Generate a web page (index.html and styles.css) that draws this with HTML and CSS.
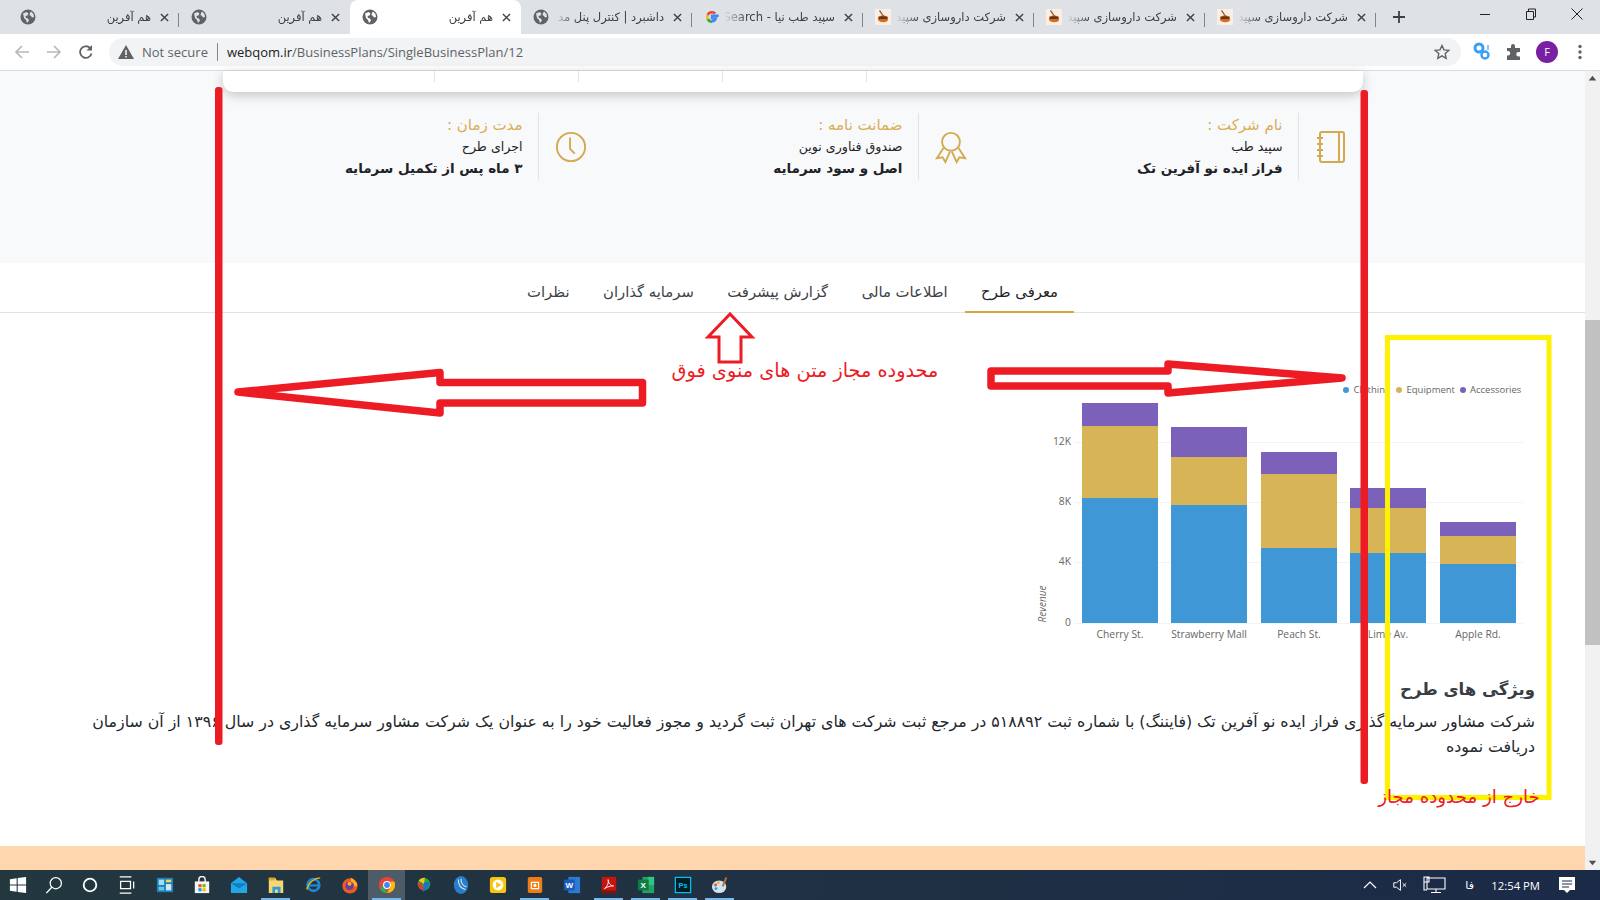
FILE: index.html
```html
<!DOCTYPE html>
<html lang="fa">
<head>
<meta charset="utf-8">
<title>هم آفرین</title>
<link rel="stylesheet" href="styles.css">
</head>
<body>
<svg class="defs" width="0" height="0" aria-hidden="true">
  <symbol id="globe" viewBox="0 0 16 16">
    <circle cx="8" cy="8" r="7.5" fill="#5f6368"/>
    <path d="M3 4.5 6.5 3l2 1.5-1 2-2 .5.5 2 2 .5 1 2-2 2.5-1-3-2-2zM11 2.5l2.5 2.5.5 3-2 .5-1-1.5-1.500-1 .5-2z" fill="#dee1e6"/>
  </symbol>
  <symbol id="globe-w" viewBox="0 0 16 16">
    <circle cx="8" cy="8" r="7.500" fill="#5f6368"/>
    <path d="M3 4.500 6.500 3l2 1.500-1 2-2 .5.5 2 2 .5 1 2-2 2.500-1-3-2-2zM11 2.500l2.500 2.500.5 3-2 .5-1-1.500-1.500-1 .5-2z" fill="#fff"/>
  </symbol>
  <symbol id="pharma" viewBox="0 0 16 16">
    <rect width="16" height="16" fill="#fbeee2"/>
    <path d="M3 8c2-2 8-2 10 0v3c-1 3-8 3-10 0z" fill="#d9691e"/>
    <path d="M4 8c2-1 6-1 8 0v2H4z" fill="#5c3a21"/>
    <path d="M5 1l4 6-1 .5L4 2z" fill="#8a5a3a"/>
  </symbol>
  <symbol id="close" viewBox="0 0 10 10">
    <path d="M1 1l8 8M9 1l-8 8" stroke="#3c4043" stroke-width="1.500" fill="none"/>
  </symbol>
</svg>

<div class="tabstrip">
  <div class="tab sep"><svg class="fav"><use href="#globe"/></svg><span class="tab-title">هم آفرین</span><svg class="tab-x"><use href="#close"/></svg></div>
  <div class="tab"><svg class="fav"><use href="#globe"/></svg><span class="tab-title">هم آفرین</span><svg class="tab-x"><use href="#close"/></svg></div>
  <div class="tab active"><svg class="fav"><use href="#globe-w"/></svg><span class="tab-title">هم آفرین</span><svg class="tab-x"><use href="#close"/></svg></div>
  <div class="tab sep"><svg class="fav"><use href="#globe"/></svg><span class="tab-title">داشبرد | کنترل پنل مد</span><svg class="tab-x"><use href="#close"/></svg></div>
  <div class="tab sep">
    <svg class="fav" viewBox="0 0 16 16">
      <path d="M14.700 6.700H8v2.700h3.900A4.200 4.200 0 0 1 8 12.300" fill="none" stroke="#4285f4" stroke-width="2.400"/>
      <path d="M8 12.700a4.700 4.700 0 0 1-4.300-2.800" fill="none" stroke="#34a853" stroke-width="2.600"/>
      <path d="M3.700 10.200a5 5 0 0 1 0-4.400" fill="none" stroke="#fbbc05" stroke-width="2.600"/>
      <path d="M3.700 5.900A4.800 4.800 0 0 1 11.200 4.500" fill="none" stroke="#ea4335" stroke-width="2.600"/>
    </svg>
    <span class="tab-title">سپید طب نیا - Search</span><svg class="tab-x"><use href="#close"/></svg></div>
  <div class="tab sep"><svg class="fav"><use href="#pharma"/></svg><span class="tab-title">شرکت داروسازی سپید</span><svg class="tab-x"><use href="#close"/></svg></div>
  <div class="tab sep"><svg class="fav"><use href="#pharma"/></svg><span class="tab-title">شرکت داروسازی سپید</span><svg class="tab-x"><use href="#close"/></svg></div>
  <div class="tab sep"><svg class="fav"><use href="#pharma"/></svg><span class="tab-title">شرکت داروسازی سپید</span><svg class="tab-x"><use href="#close"/></svg></div>
  <svg class="newtab" viewBox="0 0 12 12"><path d="M6 0v12M0 6h12" stroke="#3c4043" stroke-width="1.800"/></svg>
  <div class="winctl">
    <svg class="wc" viewBox="0 0 46 14"><path d="M18 7.500h10" stroke="#222" stroke-width="1"/></svg>
    <svg class="wc" viewBox="0 0 46 14"><path d="M18.500 4.500h7v8h-7zM20.500 4.500v-2.500h7v8h-2" fill="none" stroke="#222"/></svg>
    <svg class="wc" viewBox="0 0 46 14"><path d="M17.500 1.500l11 11M28.500 1.500l-11 11" stroke="#222" fill="none"/></svg>
  </div>
</div>

<div class="toolbar">
  <svg class="nav-ic" viewBox="0 0 16 16"><path d="M15 8H2M8 2 2 8l6 6" fill="none" stroke="#b6b8bb" stroke-width="1.700"/></svg>
  <svg class="nav-ic" viewBox="0 0 16 16"><path d="M1 8h13M8 2l6 6-6 6" fill="none" stroke="#b6b8bb" stroke-width="1.700"/></svg>
  <svg class="nav-ic" viewBox="0 0 16 16"><path d="M13.500 9.500A5.800 5.800 0 1 1 12 4" fill="none" stroke="#5f6368" stroke-width="1.800"/><path d="M14 1v5.500H8.500z" fill="#5f6368"/></svg>
  <div class="omnibox">
    <svg class="warn" viewBox="0 0 16 14"><path d="M8 0l8 14H0z" fill="#5f6368"/><path d="M7.200 5h1.600v5H7.200zM7.200 11h1.600v1.500H7.200z" fill="#f1f3f4"/></svg>
    <span class="not-secure">Not secure</span>
    <span class="omni-sep"></span>
    <span class="url"><b>webqom.ir</b>/BusinessPlans/SingleBusinessPlan/12</span>
    <svg class="star" viewBox="0 0 16 16"><path d="M8 1.500l2 4.400 4.700.5-3.500 3.200 1 4.700L8 11.900l-4.200 2.400 1-4.700L1.300 6.400 6 5.900z" fill="none" stroke="#5f6368" stroke-width="1.400"/></svg>
  </div>
  <div class="ext-row">
    <svg class="ext" viewBox="0 0 20 20"><circle cx="7" cy="6" r="4" fill="none" stroke="#3aa0f3" stroke-width="3"/><circle cx="13" cy="13" r="3.500" fill="none" stroke="#3aa0f3" stroke-width="2.400"/><path d="M16 3v5" stroke="#8cc8f7" stroke-width="2"/></svg>
    <svg class="ext" viewBox="0 0 20 20"><path d="M3 6h4V4a2 2 0 0 1 4 0v2h5v4h-1.500a2.200 2.200 0 0 0 0 4.500H16V18H3v-4.500h1a2.200 2.200 0 0 0 0-4.500H3z" fill="#5f6368"/></svg>
    <span class="avatar">F</span>
    <svg class="ext" viewBox="0 0 20 20"><circle cx="10" cy="4.500" r="1.700" fill="#5f6368"/><circle cx="10" cy="10" r="1.700" fill="#5f6368"/><circle cx="10" cy="15.500" r="1.700" fill="#5f6368"/></svg>
  </div>
</div>

<div class="viewport">
  <div class="page">
    <section class="hero">
      <div class="container">
        <div class="card">
          <div class="card-cell"></div><div class="card-cell"></div><div class="card-cell"></div><div class="card-cell"></div>
        </div>
        <div class="facts" dir="rtl">
          <div class="fact">
            <div class="fact-ic">
              <svg class="gold" viewBox="0 0 30 34"><rect x="4" y="2" width="24" height="30" rx="2"/><path d="M23 2v30M1 8h6M1 14h6M1 20h6M1 26h6"/></svg>
            </div>
            <div class="fact-body">
              <div class="fact-title">نام شرکت :</div>
              <div class="fact-sub">سپید طب</div>
              <div class="fact-val">فراز ایده نو آفرین تک</div>
            </div>
          </div>
          <div class="fact">
            <div class="fact-ic">
              <svg class="gold" viewBox="0 0 34 34"><circle cx="17" cy="11.500" r="9.500"/><path d="M9 18 2 29l6-1 3 5 5-11M25 18l7 11-6-1-3 5-5-11"/></svg>
            </div>
            <div class="fact-body">
              <div class="fact-title">ضمانت نامه :</div>
              <div class="fact-sub">صندوق فناوری نوین</div>
              <div class="fact-val">اصل و سود سرمایه</div>
            </div>
          </div>
          <div class="fact">
            <div class="fact-ic">
              <svg class="gold" viewBox="0 0 34 34"><circle cx="17" cy="17" r="15"/><path d="M16 7v12l5 5"/></svg>
            </div>
            <div class="fact-body">
              <div class="fact-title">مدت زمان :</div>
              <div class="fact-sub">اجرای طرح</div>
              <div class="fact-val">۳ ماه پس از تکمیل سرمایه</div>
            </div>
          </div>
        </div>
      </div>
    </section>

    <nav class="nav" dir="rtl">
      <a class="nav-link on">معرفی طرح</a>
      <a class="nav-link">اطلاعات مالی</a>
      <a class="nav-link">گزارش پیشرفت</a>
      <a class="nav-link">سرمایه گذاران</a>
      <a class="nav-link">نظرات</a>
    </nav>

    <main class="content">
      <svg class="chart" viewBox="1020 345 530 310">
        <g class="grid">
          <path d="M1074 442.500h449M1074 502.500h449M1074 562.500h449M1074 623.500h449"/>
        </g>
        <g class="axis">
          <text x="1071" y="445" text-anchor="end">12K</text>
          <text x="1071" y="505" text-anchor="end">8K</text>
          <text x="1071" y="565" text-anchor="end">4K</text>
          <text x="1071" y="626" text-anchor="end">0</text>
          <text class="axis-title" transform="translate(1046 604) rotate(-90)" text-anchor="middle">Revenue</text>
        </g>
        <g class="c-blue">
          <rect x="1082" y="498" width="76" height="125"/>
          <rect x="1171" y="505" width="76" height="118"/>
          <rect x="1261" y="548" width="76" height="75"/>
          <rect x="1350" y="553" width="76" height="70"/>
          <rect x="1440" y="564" width="76" height="59"/>
        </g>
        <g class="c-yellow">
          <rect x="1082" y="426" width="76" height="72"/>
          <rect x="1171" y="457" width="76" height="48"/>
          <rect x="1261" y="474" width="76" height="74"/>
          <rect x="1350" y="508" width="76" height="45"/>
          <rect x="1440" y="536" width="76" height="28"/>
        </g>
        <g class="c-purple">
          <rect x="1082" y="403" width="76" height="23"/>
          <rect x="1171" y="427" width="76" height="30"/>
          <rect x="1261" y="452" width="76" height="22"/>
          <rect x="1350" y="488" width="76" height="20"/>
          <rect x="1440" y="522" width="76" height="14"/>
        </g>
        <g class="axis" text-anchor="middle">
          <text x="1120" y="638">Cherry St.</text>
          <text x="1209" y="638">Strawberry Mall</text>
          <text x="1299" y="638">Peach St.</text>
          <text x="1388" y="638">Lime Av.</text>
          <text x="1478" y="638">Apple Rd.</text>
        </g>
        <g class="legend">
          <circle class="c-blue" cx="1346" cy="390" r="3"/><text x="1353.500" y="393">Clothing</text>
          <circle class="c-yellow" cx="1399" cy="390" r="3"/><text x="1406.500" y="393">Equipment</text>
          <circle class="c-purple" cx="1463" cy="390" r="3"/><text x="1470" y="393">Accessories</text>
        </g>
      </svg>
      <article class="about" dir="rtl">
        <h3 class="about-h">ویژگی های طرح</h3>
        <p class="about-p">شرکت مشاور سرمایه گذاری فراز ایده نو آفرین تک (فایننگ) با شماره ثبت ۵۱۸۸۹۲ در مرجع ثبت شرکت های تهران ثبت گردید و مجوز فعالیت خود را به عنوان یک شرکت مشاور سرمایه گذاری در سال ۱۳۹۶ از آن سازمان دریافت نموده</p>
      </article>
    </main>
    <div class="footer-bar"></div>
  </div>
  <div class="scrollbar">
    <svg class="sb-arrow" viewBox="0 0 16 16"><path d="M4 10l4-5 4 5z" fill="#505050"/></svg>
    <div class="sb-track"><div class="sb-thumb"></div></div>
    <svg class="sb-arrow" viewBox="0 0 16 16"><path d="M4 6l4 5 4-5z" fill="#505050"/></svg>
  </div>
</div>

<footer class="taskbar">
  <div class="tb-sys">
    <svg viewBox="0 0 20 20"><path d="M1 3.500 8.500 2.400V9.500H1zM9.700 2.200 19 1V9.500H9.700zM1 10.500H8.500V17.600L1 16.500zM9.700 10.500H19V19L9.700 17.800z" fill="#fff"/></svg>
  </div>
  <div class="tb-sys">
    <svg viewBox="0 0 20 20"><circle cx="12" cy="8" r="6.200" fill="none" stroke="#fff" stroke-width="1.400"/><path d="M7.500 12.500 1.500 19" stroke="#fff" stroke-width="1.500"/></svg>
  </div>
  <div class="tb-sys">
    <svg viewBox="0 0 20 20"><circle cx="10" cy="10" r="7" fill="none" stroke="#fff" stroke-width="2"/></svg>
  </div>
  <div class="tb-sys">
    <svg viewBox="0 0 20 20"><path d="M3 1h13M3 19h13M4 6h11v8H4zM18.500 6v8" fill="none" stroke="#fff" stroke-width="1.400"/></svg>
  </div>
  <div class="tb-gap"></div>
  <div class="tb-app"><svg viewBox="0 0 20 20"><rect x="1" y="2" width="18" height="16" fill="#1f7fb8"/><rect x="3" y="4" width="6" height="6" fill="#9fe0f5"/><rect x="11" y="4" width="6" height="3" fill="#f4d35e"/><rect x="11" y="9" width="6" height="7" fill="#cfeaf7"/><rect x="3" y="12" width="6" height="4" fill="#6cc3e8"/></svg></div>
  <div class="tb-app"><svg viewBox="0 0 20 20"><path d="M2 6h16v13H2z" fill="#f5f5f5"/><path d="M6.500 8V4a3.500 3.500 0 0 1 7 0v4" fill="none" stroke="#f5f5f5" stroke-width="1.600"/><rect x="6" y="9" width="3.500" height="3.500" fill="#f25022"/><rect x="10.500" y="9" width="3.500" height="3.500" fill="#7fba00"/><rect x="6" y="13.500" width="3.500" height="3.500" fill="#00a4ef"/><rect x="10.500" y="13.500" width="3.500" height="3.500" fill="#ffb900"/></svg></div>
  <div class="tb-app"><svg viewBox="0 0 20 20"><path d="M1 8 10 1l9 7v11H1z" fill="#21a6e6"/><path d="M1 8l9 6 9-6" fill="#0f7fc0"/></svg></div>
  <div class="tb-app open"><svg viewBox="0 0 20 20"><path d="M2 2h7l2 3h7v14H2z" fill="#f7d774"/><path d="M2 2h7v3H2z" fill="#e3a92f"/><path d="M6 12h9v7h-3v-4H9v4H6z" fill="#2f9bd9"/></svg></div>
  <div class="tb-app"><svg viewBox="0 0 20 20"><circle cx="10.500" cy="10" r="6.500" fill="none" stroke="#1e88d4" stroke-width="3"/><path d="M5 10.500h11" stroke="#1e88d4" stroke-width="2.500"/><path d="M3 15c2-8 9-13 15-13" fill="none" stroke="#e8b51e" stroke-width="1.400"/></svg></div>
  <div class="tb-app"><svg viewBox="0 0 20 20"><circle cx="10" cy="11" r="8.500" fill="#ee5a24"/><path d="M11 2c4 2 7 5 7 9l-3 1c0-3-2-5-4-6z" fill="#ffb01f"/><circle cx="9.500" cy="11" r="4.500" fill="#6b3fa0"/><circle cx="9.500" cy="8.500" r="2.200" fill="#ffb01f"/></svg></div>
  <div class="tb-app open active"><svg viewBox="0 0 20 20"><circle cx="10" cy="10" r="9" fill="#ea4335"/><path d="M10 19a9 9 0 0 1-7.800-4.500L7 8z" fill="#34a853"/><path d="M19 10a9 9 0 0 1-9 9l4.500-7.500-.5-5.500h4A9 9 0 0 1 19 10z" fill="#fbbc05"/><circle cx="10" cy="10" r="4.400" fill="#fff"/><circle cx="10" cy="10" r="3.200" fill="#4285f4"/></svg></div>
  <div class="tb-app"><svg viewBox="0 0 20 20"><circle cx="10" cy="9" r="7" fill="#2aa43b"/><path d="M4 5a8 8 0 0 1 7-3l-1 7z" fill="#f5c518"/><path d="M3 8c0 5 3 8 8 8l-4-8z" fill="#e23a2e"/><path d="M10 7l7 0-3 6-5 5z" fill="#1c6fd6"/></svg></div>
  <div class="tb-app"><svg viewBox="0 0 20 20"><ellipse cx="10" cy="10" rx="8" ry="10" fill="#2a7dc9"/><path d="M7 4c0 6 3 10 8 11M10 3c0 4 2 8 6 9" fill="none" stroke="#d6ecfb" stroke-width="1.200"/></svg></div>
  <div class="tb-app"><svg viewBox="0 0 20 20"><rect x="1" y="1" width="18" height="18" rx="3" fill="#f7c60a"/><circle cx="10" cy="10" r="6" fill="#fff"/><path d="M8 6.500 13.500 10 8 13.500z" fill="#f7c60a"/></svg></div>
  <div class="tb-app open"><svg viewBox="0 0 20 20"><rect x="2" y="1" width="16" height="18" rx="2" fill="#ef7d15"/><path d="M6 7h8v7H6z" fill="none" stroke="#fff" stroke-width="1.300"/><circle cx="10" cy="10.500" r="1.800" fill="#fff"/></svg></div>
  <div class="tb-app"><svg viewBox="0 0 20 20"><rect x="6" y="1" width="13" height="18" fill="#2b7cd3"/><rect x="1" y="4" width="12" height="12" fill="#185abd"/><text class="tb-letter" x="7" y="13.500" text-anchor="middle">W</text></svg></div>
  <div class="tb-app open"><svg viewBox="0 0 20 20"><rect x="2" y="1" width="16" height="18" fill="#c8140f"/><rect x="2" y="16" width="16" height="3" fill="#8e0d0a"/><path d="M5 14c3-2 5-7 4-10 0 4 3 7 6 7-3 0-7 1-10 3z" fill="none" stroke="#fff" stroke-width="1"/></svg></div>
  <div class="tb-app open"><svg viewBox="0 0 20 20"><rect x="6" y="1" width="13" height="18" fill="#21a366"/><rect x="12" y="1" width="7" height="9" fill="#33c481"/><rect x="1" y="4" width="12" height="12" fill="#107c41"/><text class="tb-letter" x="7" y="13.500" text-anchor="middle">X</text></svg></div>
  <div class="tb-app open"><svg viewBox="0 0 20 20"><rect x="1.500" y="1.500" width="17" height="17" fill="#001d26" stroke="#00c8ff" stroke-width="1.300"/><text class="tb-ps" x="10" y="13.500" text-anchor="middle">Ps</text></svg></div>
  <div class="tb-app open"><svg viewBox="0 0 20 20"><ellipse cx="9" cy="12" rx="8" ry="7" fill="#cfe4ef"/><circle cx="5" cy="10" r="1.600" fill="#e3503c"/><circle cx="8" cy="7.500" r="1.600" fill="#f0b429"/><circle cx="5.500" cy="14" r="1.600" fill="#2f9bd9"/><path d="M16 1l2 1-4 10-2-1z" fill="#b5762a"/></svg></div>
  <div class="tray">
    <svg class="tr-ic" viewBox="0 0 16 16"><path d="M2 11l6-6 6 6" fill="none" stroke="#fff" stroke-width="1.200"/></svg>
    <svg class="tr-ic" viewBox="0 0 18 16"><path d="M2 5.500h3L9.500 2v12L5 10.500H2zM12 6l4 4M16 6l-4 4" fill="none" stroke="#fff" stroke-width="1.100"/></svg>
    <svg class="tr-ic wide" viewBox="0 0 24 18"><path d="M5 2h18v11H5zM2 1h5v5H2zM14 13v3M9 16.500h10M2 6v8h3" fill="#1b2b47" stroke="#fff" stroke-width="1.100"/></svg>
    <span class="tr-lang">فا</span>
    <span class="tr-time">12:54 PM</span>
    <svg class="tr-note" viewBox="0 0 18 18"><path d="M1 1h16v13h-5l-3 3-3-3H1z" fill="#fff"/><path d="M4 5h10M4 8h10M4 11h7" stroke="#1b2b47" stroke-width="1"/></svg>
  </div>
</footer>

<svg class="marks" viewBox="0 0 1600 900">
  <rect class="mark-yellow" x="1387.500" y="337.500" width="161.500" height="460"/>
  <rect class="mark-fill" x="215" y="87" width="7.500" height="658" rx="3"/>
  <rect class="mark-fill" x="1360.500" y="90" width="7.500" height="694" rx="3"/>
  <path class="mark-line" d="M238 392 440 372.500v10H642.500v20.500H440v10z"/>
  <path class="mark-line" d="M991 371H1168v-7L1342 378 1168 393v-7H991z"/>
  <path class="mark-thin" d="M730 314 708 337h11v25h22V337h11z"/>
  <text class="mark-text" x="805" y="377" text-anchor="middle" direction="rtl">محدوده مجاز متن های منوی فوق</text>
  <text class="mark-text small" x="1459" y="803" text-anchor="middle" direction="rtl">خارج از محدوده مجاز</text>
</svg>
</body>
</html>
```
FILE: styles.css
```css
* { box-sizing: border-box; }
html, body { margin: 0; padding: 0; }
body {
  position: relative;
  width: 1600px;
  height: 900px;
  overflow: hidden;
  display: flex;
  flex-direction: column;
  background: #fff;
  font-family: "DejaVu Sans", sans-serif;
}
.defs { position: absolute; }

/* tab strip */
.tabstrip {
  height: 34px;
  flex: none;
  display: flex;
  align-items: stretch;
  padding-left: 8px;
  background: #dee1e6;
}
.tab {
  position: relative;
  width: 171px;
  flex: none;
  display: flex;
  align-items: center;
  padding: 0 10px 0 12px;
  border-radius: 8px 8px 0 0;
}
.tab.active { background: #fff; }
.tab.sep::after {
  content: "";
  position: absolute;
  right: 0;
  top: 13px;
  height: 14px;
  width: 1px;
  background: #80868b;
}
.fav { width: 16px; height: 16px; flex: none; }
.tab-title {
  flex: 1;
  min-width: 0;
  overflow: hidden;
  white-space: nowrap;
  direction: rtl;
  text-align: right;
  font-size: 11.500px;
  color: #3c4043;
  padding-right: 1px;
  margin-left: 4px;
  -webkit-mask-image: linear-gradient(to right, transparent 0, #000 24px);
  mask-image: linear-gradient(to right, transparent 0, #000 24px);
}
.tab-x { width: 9px; height: 9px; flex: none; margin: 0 0 0 8px; }
.newtab { width: 12px; height: 12px; align-self: center; margin-left: 17px; flex: none; }
.winctl { margin-left: auto; display: flex; align-items: flex-start; padding-top: 7px; }
.wc { width: 46px; height: 14px; display: block; }

/* toolbar */
.toolbar {
  height: 37px;
  flex: none;
  display: flex;
  align-items: center;
  padding: 0 0 0 14px;
  background: #fff;
  border-bottom: 1px solid #dadce0;
}
.nav-ic { width: 16px; height: 16px; flex: none; margin-right: 16px; }
.omnibox {
  width: 1352px;
  height: 28px;
  margin-left: -1px;
  border-radius: 14px;
  background: #f1f3f4;
  display: flex;
  align-items: center;
  padding-left: 9px;
  font-family: "Open Sans", sans-serif;
  font-size: 13px;
  color: #5f6368;
}
.warn { width: 16px; height: 14px; flex: none; }
.not-secure { margin-left: 8px; white-space: nowrap; }
.omni-sep { width: 1px; height: 18px; background: #80868b; margin: 0 9px; flex: none; }
.url { white-space: nowrap; }
.url b { font-weight: 400; color: #202124; }
.star { width: 16px; height: 16px; margin-left: auto; margin-right: 11px; flex: none; }
.ext-row { display: flex; align-items: center; flex: 1; padding-left: 11px; gap: 12px; }
.ext { width: 20px; height: 20px; flex: none; }
.avatar {
  width: 22px;
  height: 22px;
  flex: none;
  border-radius: 50%;
  background: #7b1fa2;
  color: #fff;
  font: 11px/22px "Open Sans", sans-serif;
  text-align: center;
}

/* viewport */
.viewport { flex: 1; min-height: 0; display: flex; }
.page { flex: 1; min-width: 0; display: flex; flex-direction: column; }
.scrollbar { width: 15px; flex: none; display: flex; flex-direction: column; background: #f1f1f1; }
.sb-arrow { width: 15px; height: 15px; flex: none; }
.sb-track { flex: 1; padding-top: 234px; }
.sb-thumb { height: 325px; background: #c1c1c1; }

/* hero */
.hero { height: 192px; flex: none; background: #f8f9fb; }
.container { width: 1140px; margin: 0 auto; }
.card {
  height: 21px;
  display: flex;
  padding-left: 211px;
  background: #fff;
  border-radius: 0 0 10px 10px;
  box-shadow: 0 3px 12px rgba(0, 0, 0, .22);
}
.card-cell { width: 144px; height: 11px; border-left: 1px solid #e4e4e4; }
.facts { display: flex; margin-top: 21px; }
.fact { width: 380px; height: 67px; display: flex; }
.fact-ic { width: 64px; flex: none; display: flex; align-items: center; justify-content: center; }
.gold { width: 32px; height: 34px; fill: none; stroke: #d4a94f; stroke-width: 2; }
.fact-body { flex: 1; border-right: 1px solid #e3e3e3; padding-right: 15px; color: #1f2226; }
.fact-title { font-size: 15px; line-height: 25px; color: #d9ae55; }
.fact-sub { font-size: 12.600px; line-height: 18px; }
.fact-val { font-size: 13.500px; line-height: 24px; font-weight: 700; }

/* nav */
.nav {
  height: 50px;
  flex: none;
  display: flex;
  justify-content: center;
  gap: 1.500px;
  border-bottom: 1px solid #e3e3e3;
}
.nav-link {
  height: 50px;
  padding: 0 16px;
  font-size: 14.800px;
  line-height: 57px;
  color: #3d4146;
}
.nav-link.on { color: #1f2226; border-bottom: 2px solid #d4a744; }

/* content */
.content { flex: 1; min-height: 0; padding-top: 32px; }
.chart { display: block; width: 530px; height: 310px; margin-left: 1020px; }
.grid path { stroke: #f3f3f3; stroke-width: 1; fill: none; }
.axis, .legend { font-family: "Open Sans", sans-serif; font-size: 10.300px; fill: #666; }
.axis-title { font-style: italic; font-size: 10px; }
.c-blue { fill: #4097d6; }
.c-yellow { fill: #d7b556; }
.c-purple { fill: #7b61b9; }
.legend text { font-size: 9.500px; }
.about { padding: 22px 50px 0 82px; color: #24272b; }
.about-h { margin: 0; font-size: 16.500px; line-height: 26px; font-weight: 700; color: #3a3d42; }
.about-p { margin: 6px 0 0; font-size: 15.800px; line-height: 25px; }
.footer-bar { height: 24px; flex: none; background: #ffd6ad; }

/* taskbar */
.taskbar {
  height: 30px;
  flex: none;
  display: flex;
  align-items: stretch;
  background: linear-gradient(to right, #23373f, #1b2a47);
}
.tb-sys { width: 36px; flex: none; display: flex; align-items: center; justify-content: center; }
.tb-sys svg { width: 18px; height: 18px; }
.tb-gap { width: 2px; flex: none; }
.tb-app { position: relative; width: 37px; flex: none; display: flex; align-items: center; justify-content: center; }
.tb-app svg { width: 18px; height: 18px; }
.tb-app.active { background: rgba(255, 255, 255, .2); }
.tb-app.open::after {
  content: "";
  position: absolute;
  left: 4px;
  right: 4px;
  bottom: 0;
  height: 2px;
  background: #76b9ed;
}
.tb-letter { font: 700 9px "Liberation Sans", sans-serif; fill: #fff; }
.tb-ps { font: 700 8px "Liberation Sans", sans-serif; fill: #00c8ff; }
.tray { margin-left: auto; display: flex; align-items: center; color: #fff; }
.tr-ic { width: 16px; height: 16px; flex: none; margin-right: 14px; }
.tr-ic.wide { width: 24px; height: 18px; margin-right: 14px; }
.tr-lang { font-size: 11px; width: 31px; padding-left: 5px; }
.tr-time { font: 11.300px "Open Sans", sans-serif; white-space: nowrap; margin-right: 18px; }
.tr-note { width: 18px; height: 18px; flex: none; margin-right: 24px; }

/* annotations drawn on top of the screenshot */
.marks { position: absolute; left: 0; top: 0; width: 1600px; height: 900px; pointer-events: none; }
.mark-yellow { fill: none; stroke: #fff200; stroke-width: 5; }
.mark-fill { fill: #ed1c24; }
.mark-line { fill: none; stroke: #ed1c24; stroke-width: 7.500; stroke-linejoin: round; }
.mark-thin { fill: none; stroke: #ed1c24; stroke-width: 3; }
.mark-text { fill: #ed1c24; font-size: 19.300px; }
.mark-text.small { font-size: 18.200px; }
```
